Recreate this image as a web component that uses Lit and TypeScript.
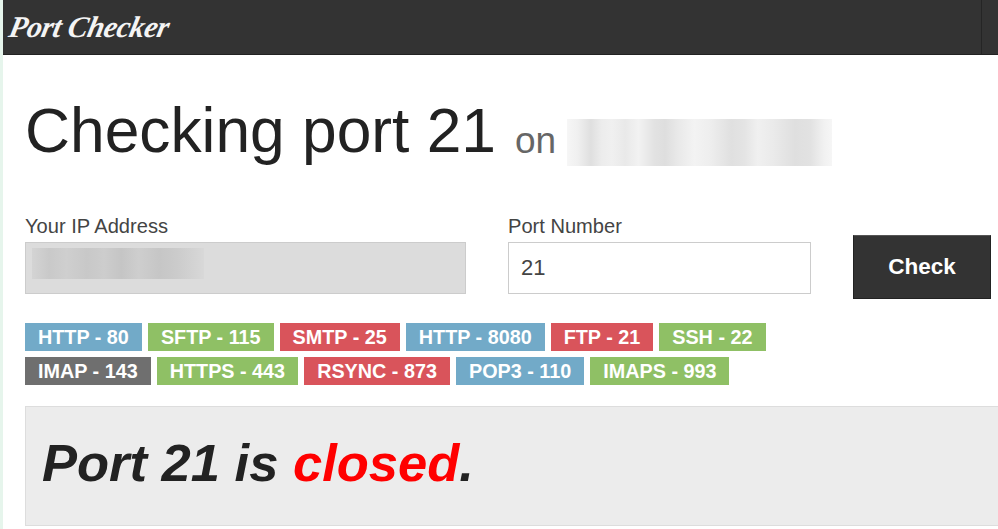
import { LitElement, html, css } from "lit";
import { customElement } from "lit/decorators.js";

const ROW1 = [
  ["HTTP - 80", "blue"], ["SFTP - 115", "green"], ["SMTP - 25", "red"],
  ["HTTP - 8080", "blue"], ["FTP - 21", "red"], ["SSH - 22", "green"],
];
const ROW2 = [
  ["IMAP - 143", "gray"], ["HTTPS - 443", "green"], ["RSYNC - 873", "red"],
  ["POP3 - 110", "blue"], ["IMAPS - 993", "green"],
];

@customElement("app-root")
export class AppRoot extends LitElement {
  static styles = css`
    :host { display: block; width: 998px; height: 529px; overflow: hidden; background: #fff;
      font-family: "Liberation Sans", Arial, sans-serif; color: #222; }
    .page { border-left: 3px solid #e6f5ec; height: 529px; box-sizing: border-box; overflow: hidden; }
    .bar { height: 55px; box-sizing: border-box; background: #333; border-bottom: 1px solid #222;
      display: flex; align-items: center; justify-content: space-between; padding-left: 3px; }
    .logo { font-family: "Liberation Serif", serif; font-style: italic; font-weight: bold; font-size: 30px;
      color: #f4f4f4; letter-spacing: -0.4px; display: inline-block; transform: skewX(-12deg); transform-origin: left bottom; margin-top: -1px; }
    .sep { width: 1px; height: 54px; background: #252525; margin-right: 16px; }
    .main { padding: 0 0 0 22px; }
    h1 { margin: 37px 0 0; font-size: 62.3px; line-height: 78px; font-weight: 400; display: flex; align-items: baseline; height: 78px; color: #222; white-space: nowrap; }
    h1 small { font-size: 37px; color: #666; margin-left: 19px; font-weight: 400; position: relative; top: 1px; }
    .blur-host { width: 265px; height: 47px; margin-left: 11px; align-self: flex-end; margin-bottom: 4px;
      background: linear-gradient(90deg, #f6f6f6 0, #f0f0f0 4%, #dfdfdf 9%, #ececec 13%, #f0f0f0 17%, #e9e9e9 22%, #f2f2f2 27%, #e2e2e2 33%, #dedede 37%, #e9e9e9 42%, #f3f3f3 48%, #eeeeee 54%, #e0e0e0 62%, #e4e4e4 67%, #f0f0f0 72%, #eaeaea 78%, #dfdfdf 86%, #e2e2e2 92%, #f1f1f1 97%, #f6f6f6 100%); }
    .form { display: flex; align-items: flex-end; margin-top: 45px; }
    .field { display: flex; flex-direction: column; }
    .field.ip { width: 441px; margin-right: 42px; }
    .field.port { width: 303px; margin-right: 42px; }
    label { font-size: 20.1px; line-height: 23px; color: #444; margin-bottom: 4px; }
    .input { height: 52px; box-sizing: border-box; border: 1px solid #ccc; font-size: 22px; color: #444;
      padding: 0 12px; display: flex; align-items: center; }
    .input.disabled { background: #dcdcdc; border-color: #ccc; padding: 0 6px; }
    .ipblur { width: 172px; height: 31px; margin-top: -10px; background: linear-gradient(90deg, #d4d4d4 0, #c9c9c9 10%, #cfcfcf 20%, #c8c8c8 32%, #cdcdcd 42%, #c5c5c5 52%, #cecece 62%, #c6c6c6 74%, #cbcbcb 84%, #d8d8d8 100%); }
    .check { width: 138px; height: 64px; box-sizing: border-box; background: #333; color: #fff; border: 1px solid #222;
      border-top-color: #555; font: bold 22.5px "Liberation Sans", Arial, sans-serif; margin-bottom: -5px; padding: 0; }
    .tags { margin-top: 29px; display: flex; flex-direction: column; gap: 6px; }
    .row { display: flex; gap: 6px; }
    .tag { height: 28px; box-sizing: border-box; padding: 0 13px; color: #fff; font-size: 19.8px; font-weight: bold;
      line-height: 28px; white-space: nowrap; }
    .blue { background: #72aac8; }
    .green { background: #8fc065; }
    .red { background: #d9545b; }
    .gray { background: #6f6f6f; }
    .result { margin-top: 21px; height: 120px; box-sizing: border-box; background: #ececec; border: 1px solid #ddd; border-right: 0;
      padding: 0 16px 8px; display: flex; align-items: center; font-size: 52.5px; font-weight: bold; font-style: italic; color: #222; white-space: pre; }
    .closed { color: #f00; }
  `;

  private renderTags(items: string[][]) {
    return html`<div class="row">${items.map(([t, c]) => html`<span class="tag ${c}">${t}</span>`)}</div>`;
  }

  render() {
    return html`
      <div class="page">
        <div class="bar"><span class="logo">Port Checker</span><span class="sep"></span></div>
        <div class="main">
          <h1>Checking port 21<small>on</small><span class="blur-host"></span></h1>
          <div class="form">
            <div class="field ip">
              <label>Your IP Address</label>
              <div class="input disabled"><div class="ipblur"></div></div>
            </div>
            <div class="field port">
              <label>Port Number</label>
              <div class="input">21</div>
            </div>
            <button class="check">Check</button>
          </div>
          <div class="tags">${this.renderTags(ROW1)}${this.renderTags(ROW2)}</div>
          <div class="result"><span>Port 21 is <span class="closed">closed</span>.</span></div>
        </div>
      </div>
    `;
  }
}
